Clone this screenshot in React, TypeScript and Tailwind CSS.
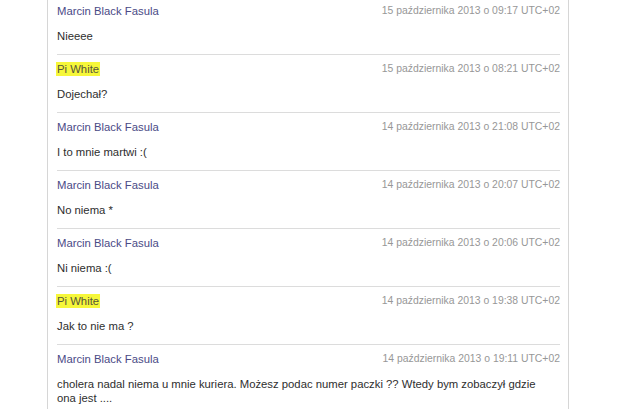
const messages = [
  { author: "Marcin Black Fasula", date: "15 października 2013 o 09:17 UTC+02", text: "Nieeee" },
  { author: "Pi White", me: true, date: "15 października 2013 o 08:21 UTC+02", text: "Dojechał?" },
  { author: "Marcin Black Fasula", date: "14 października 2013 o 21:08 UTC+02", text: "I to mnie martwi :(" },
  { author: "Marcin Black Fasula", date: "14 października 2013 o 20:07 UTC+02", text: "No niema *" },
  { author: "Marcin Black Fasula", date: "14 października 2013 o 20:06 UTC+02", text: "Ni niema :(" },
  { author: "Pi White", me: true, date: "14 października 2013 o 19:38 UTC+02", text: "Jak to nie ma ?" },
  {
    author: "Marcin Black Fasula",
    date: "14 października 2013 o 19:11 UTC+02",
    text: "cholera nadal niema u mnie kuriera. Możesz podac numer paczki ?? Wtedy bym zobaczył gdzie ona jest ....",
  },
];

export default function App() {
  return (
    <div className="h-[409px] overflow-hidden bg-white font-['Liberation_Sans',Arial,sans-serif]">
      {/* THREAD PANEL */}
      <div className="ml-[47px] w-[522px] h-[430px] -mt-[4px] border-x border-[#d6d6d6] pl-[9px] pr-[8px]">
        {messages.map((m, i) => (
          <div
            key={i}
            className={`pt-[7px] pb-[11px] ${i > 0 ? "border-t border-[#dcdcdc]" : "pt-[8px]"}`}
          >
            <div className="flex items-center justify-between h-[14px]">
              <span
                className={`text-[11.3px] leading-[14px] ${
                  m.me ? "bg-[#f6f73a] text-[#55553a] px-px -ml-px" : "text-[#4a4a86]"
                }`}
              >
                {m.author}
              </span>
              <span className="text-[10.4px] leading-[14px] text-[#979797]">{m.date}</span>
            </div>
            <p className="mt-[11px] pr-[16px] text-[11.3px] leading-[14px] text-[#2e2e2e]">{m.text}</p>
          </div>
        ))}
      </div>
    </div>
  );
}
